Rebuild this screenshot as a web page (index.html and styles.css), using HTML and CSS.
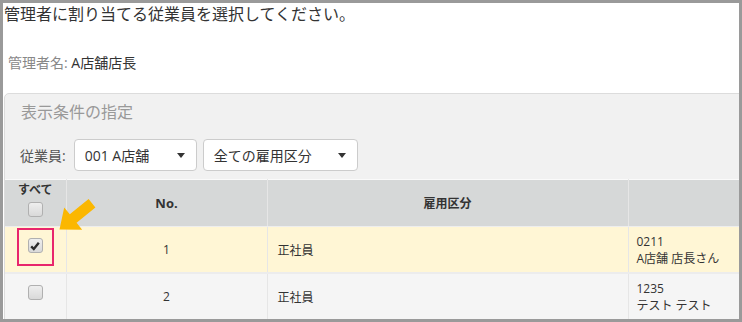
FILE: index.html
```html
<!DOCTYPE html>
<html lang="ja">
<head>
    <meta charset="UTF-8">
    <title>従業員の割り当て</title>
    <link rel="stylesheet" href="styles.css">
</head>
<body>
    <div class="frame">
        <p class="lead">管理者に割り当てる従業員を選択してください。</p>
        <p class="manager"><span class="manager-label">管理者名:</span> A店舗店長</p>

        <div class="panel">
            <h2 class="panel-title">表示条件の指定</h2>
            <div class="filters">
                <span class="filter-label">従業員:</span>
                <div class="select select-store"><span>001 A店舗</span><i class="caret"></i></div>
                <div class="select select-type"><span>全ての雇用区分</span><i class="caret"></i></div>
            </div>

            <table class="staff">
                <colgroup>
                    <col class="col-check">
                    <col class="col-no">
                    <col class="col-type">
                    <col class="col-name">
                </colgroup>
                <thead>
                    <tr>
                        <th class="check-head">
                            <div>すべて</div>
                            <span class="cb"></span>
                        </th>
                        <th class="no-head">No.</th>
                        <th>雇用区分</th>
                        <th></th>
                    </tr>
                </thead>
                <tbody>
                    <tr class="selected">
                        <td class="check-cell">
                            <span class="highlight"><span class="cb checked">
                                <svg viewBox="0 0 12 12" width="12" height="12"><path d="M2.2 6.4 L4.8 9 L9.8 2.8" fill="none" stroke="#2b2b2b" stroke-width="2.4"/></svg>
                            </span></span>
                        </td>
                        <td class="num">1</td>
                        <td>正社員</td>
                        <td class="person">0211<br>A店舗 店長さん</td>
                    </tr>
                    <tr>
                        <td class="check-cell"><span class="cb plain"></span></td>
                        <td class="num">2</td>
                        <td>正社員</td>
                        <td class="person">1235<br>テスト テスト</td>
                    </tr>
                </tbody>
            </table>
        </div>

        <!-- callout arrow pointing at the checked row -->
        <svg class="pointer" width="46" height="38" viewBox="53 195 46 38">
            <polygon points="59.5,229.5 64.2,207.4 69.8,214.3 88.6,199 95.4,207.4 76.6,222.7 82.2,229.7" fill="#fbb700"/>
        </svg>
    </div>
</body>
</html>
```

FILE: styles.css
```css
body {
    margin: 0;
    font-family: "Open Sans", "Noto Sans CJK JP", sans-serif;
    color: #333;
}

.frame {
    position: relative;
    width: 742px;
    height: 322px;
    box-sizing: border-box;
    border: 3px solid #9a9a9a;
    background-color: #fff;
    overflow: hidden;
}

.lead {
    margin: 0;
    padding-left: 1px;
    font-size: 16px;
    line-height: 22px;
    color: #333;
}

.manager {
    margin: 28px 0 0;
    padding-left: 5px;
    font-size: 14px;
    line-height: 20px;
    color: #333;
}

.manager-label {
    color: #888;
}

/* Filter panel */
.panel {
    margin: 20px -20px 0 1px;
    border: 1px solid #dcdcdc;
    border-radius: 5px 0 0 0;
    background-color: #f1f1f1;
}

.panel-title {
    margin: 0;
    padding: 7px 0 0 16px;
    font-size: 16px;
    font-weight: normal;
    line-height: 22px;
    color: #999;
}

.filters {
    display: flex;
    align-items: center;
    gap: 6px;
    padding: 16px 0 0 15px;
    height: 32px;
}

.filter-label {
    font-size: 14px;
    color: #555;
    margin-right: 2px;
}

.select {
    display: flex;
    align-items: center;
    justify-content: space-between;
    box-sizing: border-box;
    height: 32px;
    padding: 0 11px 0 10px;
    border: 1px solid #ccc;
    border-radius: 4px;
    background-color: #fff;
    font-size: 14px;
    color: #333;
}

.select-store {
    width: 123px;
}

.select-type {
    width: 155px;
}

.caret {
    width: 0;
    height: 0;
    border-left: 4px solid transparent;
    border-right: 4px solid transparent;
    border-top: 5px solid #333;
}

/* Staff table */
.staff {
    margin-top: 8px;
    width: 900px;
    table-layout: fixed;
    border-collapse: collapse;
    border-top: 1px solid #fafafa;
    font-size: 12px;
}

.col-check { width: 61px; }
.col-no { width: 201px; }
.col-type { width: 361px; }
.col-name { width: 277px; }

.staff th,
.staff td {
    height: 44px;
    padding: 0 10px;
    border: 1px solid #e6e6e6;
    border-top: none;
    border-left: none;
}

.staff th {
    background-color: #d6d8d8;
    font-weight: bold;
    text-align: center;
    color: #333;
    border-bottom: 1px solid #eeeeee;
}

.staff th.no-head {
    font-size: 13px;
}

.staff td {
    background-color: #f5f5f5;
    color: #333;
    border-bottom: 2px solid #ececec;
}

.staff tr.selected td {
    background-color: #fff6d5;
}

.staff th.check-head {
    padding: 2px 0 0;
    line-height: 16px;
    vertical-align: top;
}

.check-head .cb {
    margin-top: 4px;
}

.staff td.check-cell {
    padding: 1px 0 0;
    text-align: center;
    vertical-align: top;
}

.cb.plain {
    margin-top: 10px;
}

.num {
    text-align: center;
}

.staff td.person {
    line-height: 17px;
    padding-left: 8px;
    vertical-align: middle;
}

/* Checkbox */
.cb {
    display: inline-flex;
    align-items: center;
    justify-content: center;
    box-sizing: border-box;
    width: 15px;
    height: 15px;
    border: 1px solid #b0b0b0;
    border-radius: 3px;
    background: linear-gradient(#eeeeee, #d9d9d9);
    vertical-align: top;
}

.highlight {
    display: inline-block;
    padding: 8px 9px 11px;
    border: 2px solid #e8266d;
    line-height: 0;
}

.pointer {
    position: absolute;
    left: 50px;
    top: 192px;
}
```
